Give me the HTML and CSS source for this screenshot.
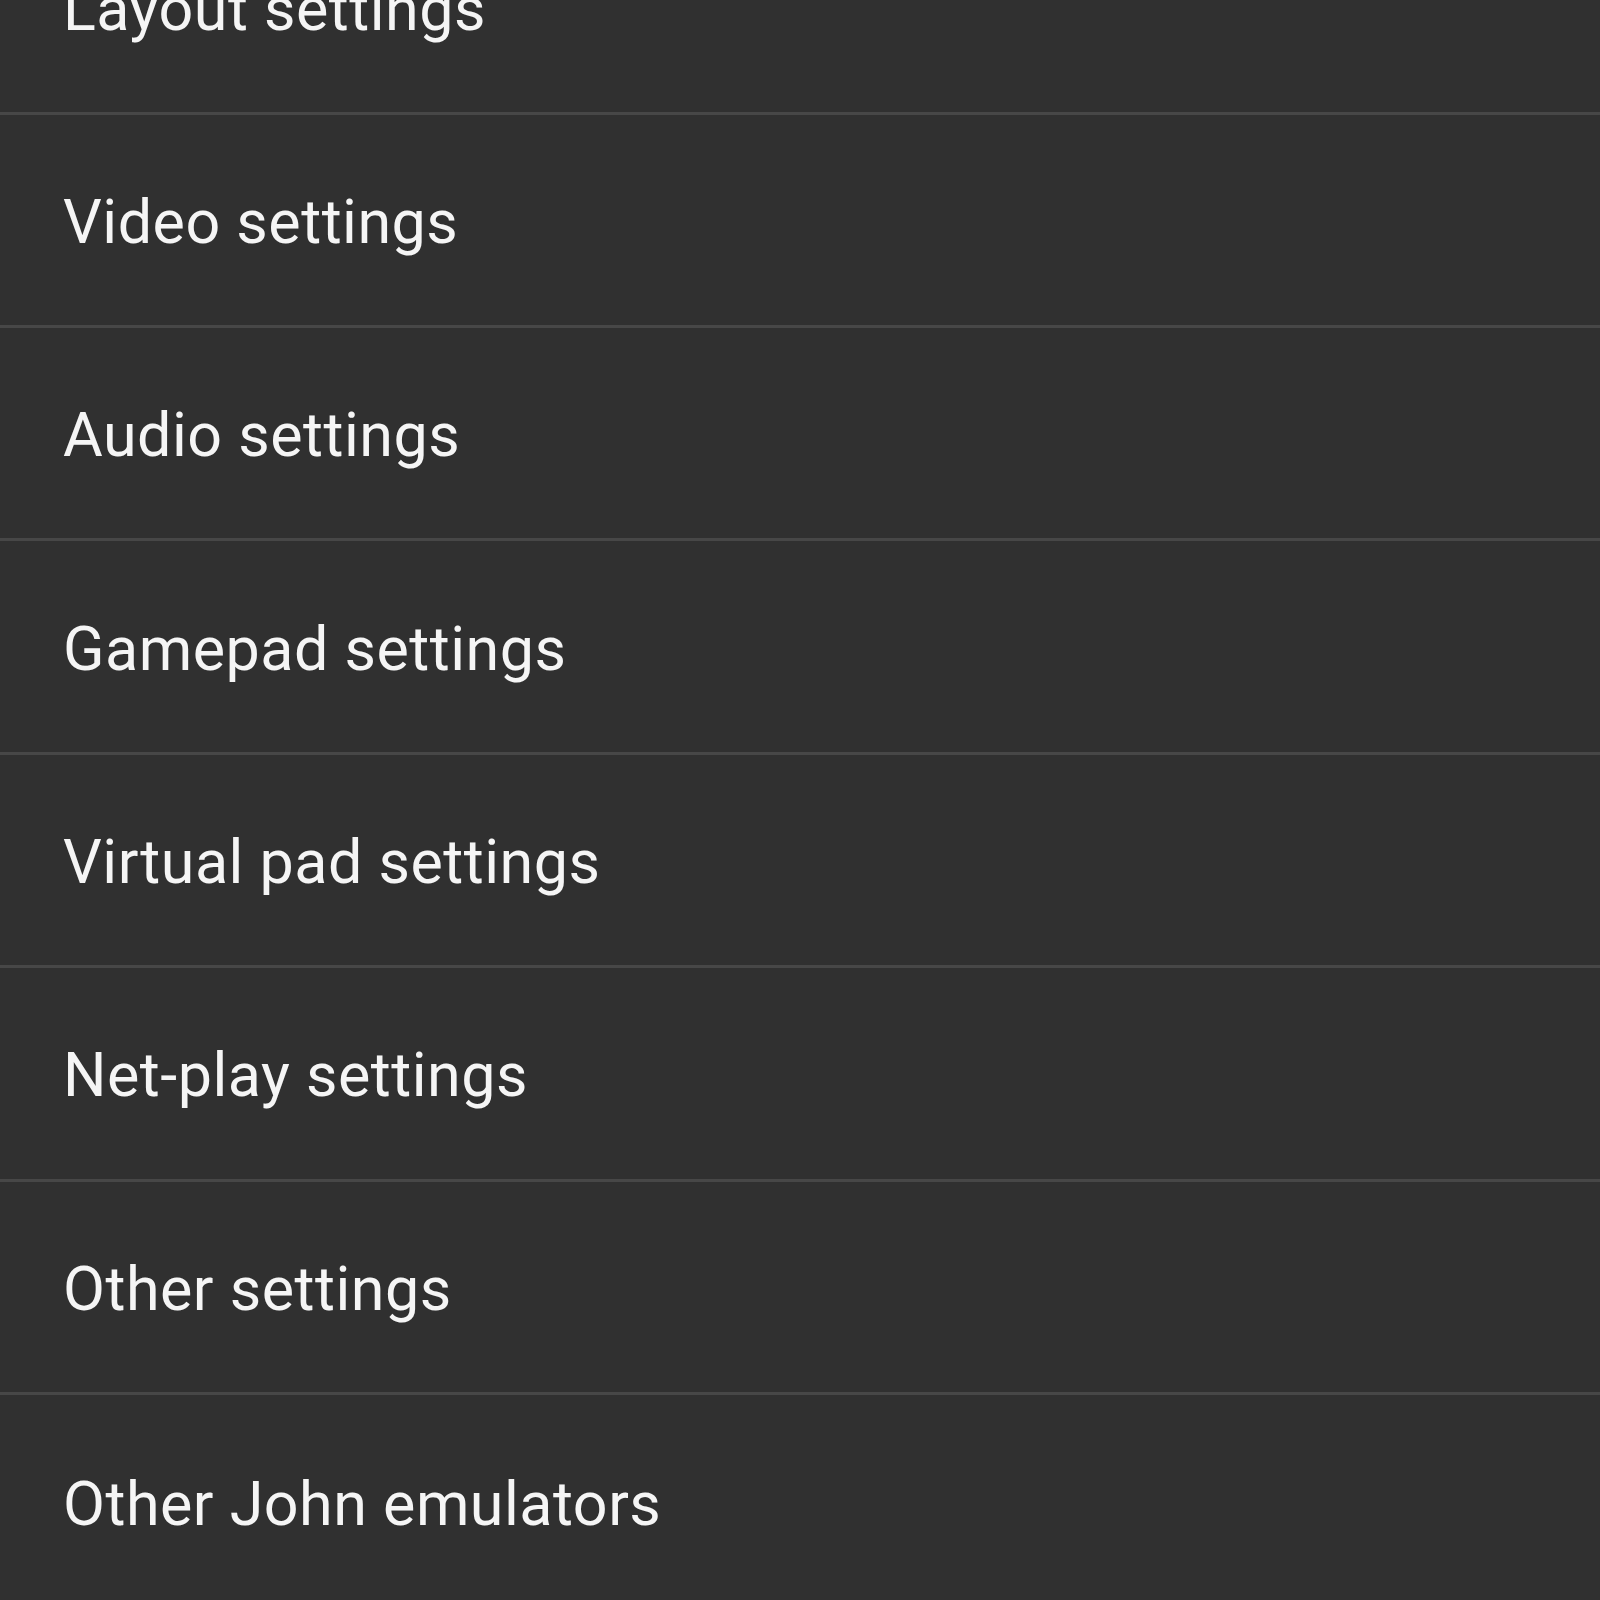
FILE: index.html
```html
<!DOCTYPE html>
<html>
<head>
<meta charset="utf-8">
<link rel="stylesheet" href="styles.css">
</head>
<body>
<ul class="list">
  <li class="item">Layout settings</li>
  <li class="item">Video settings</li>
  <li class="item">Audio settings</li>
  <li class="item">Gamepad settings</li>
  <li class="item">Virtual pad settings</li>
  <li class="item">Net-play settings</li>
  <li class="item">Other settings</li>
  <li class="item">Other John emulators</li>
</ul>
</body>
</html>
```
FILE: styles.css
```css
html, body {
  margin: 0;
  padding: 0;
  background: #303030;
  overflow: hidden;
}
.list {
  list-style: none;
  margin: -98.7px 0 0 0;
  padding: 0;
}
.item {
  box-sizing: border-box;
  height: 213.4px;
  display: flex;
  align-items: center;
  padding: 4px 0 0 63px;
  border-bottom: 3px solid #474747;
  font-family: Roboto, "Noto Sans", sans-serif;
  font-size: 61px;
  letter-spacing: 0.5px;
  color: #f5f5f5;
}
.item:last-child {
  border-bottom: none;
}
```
